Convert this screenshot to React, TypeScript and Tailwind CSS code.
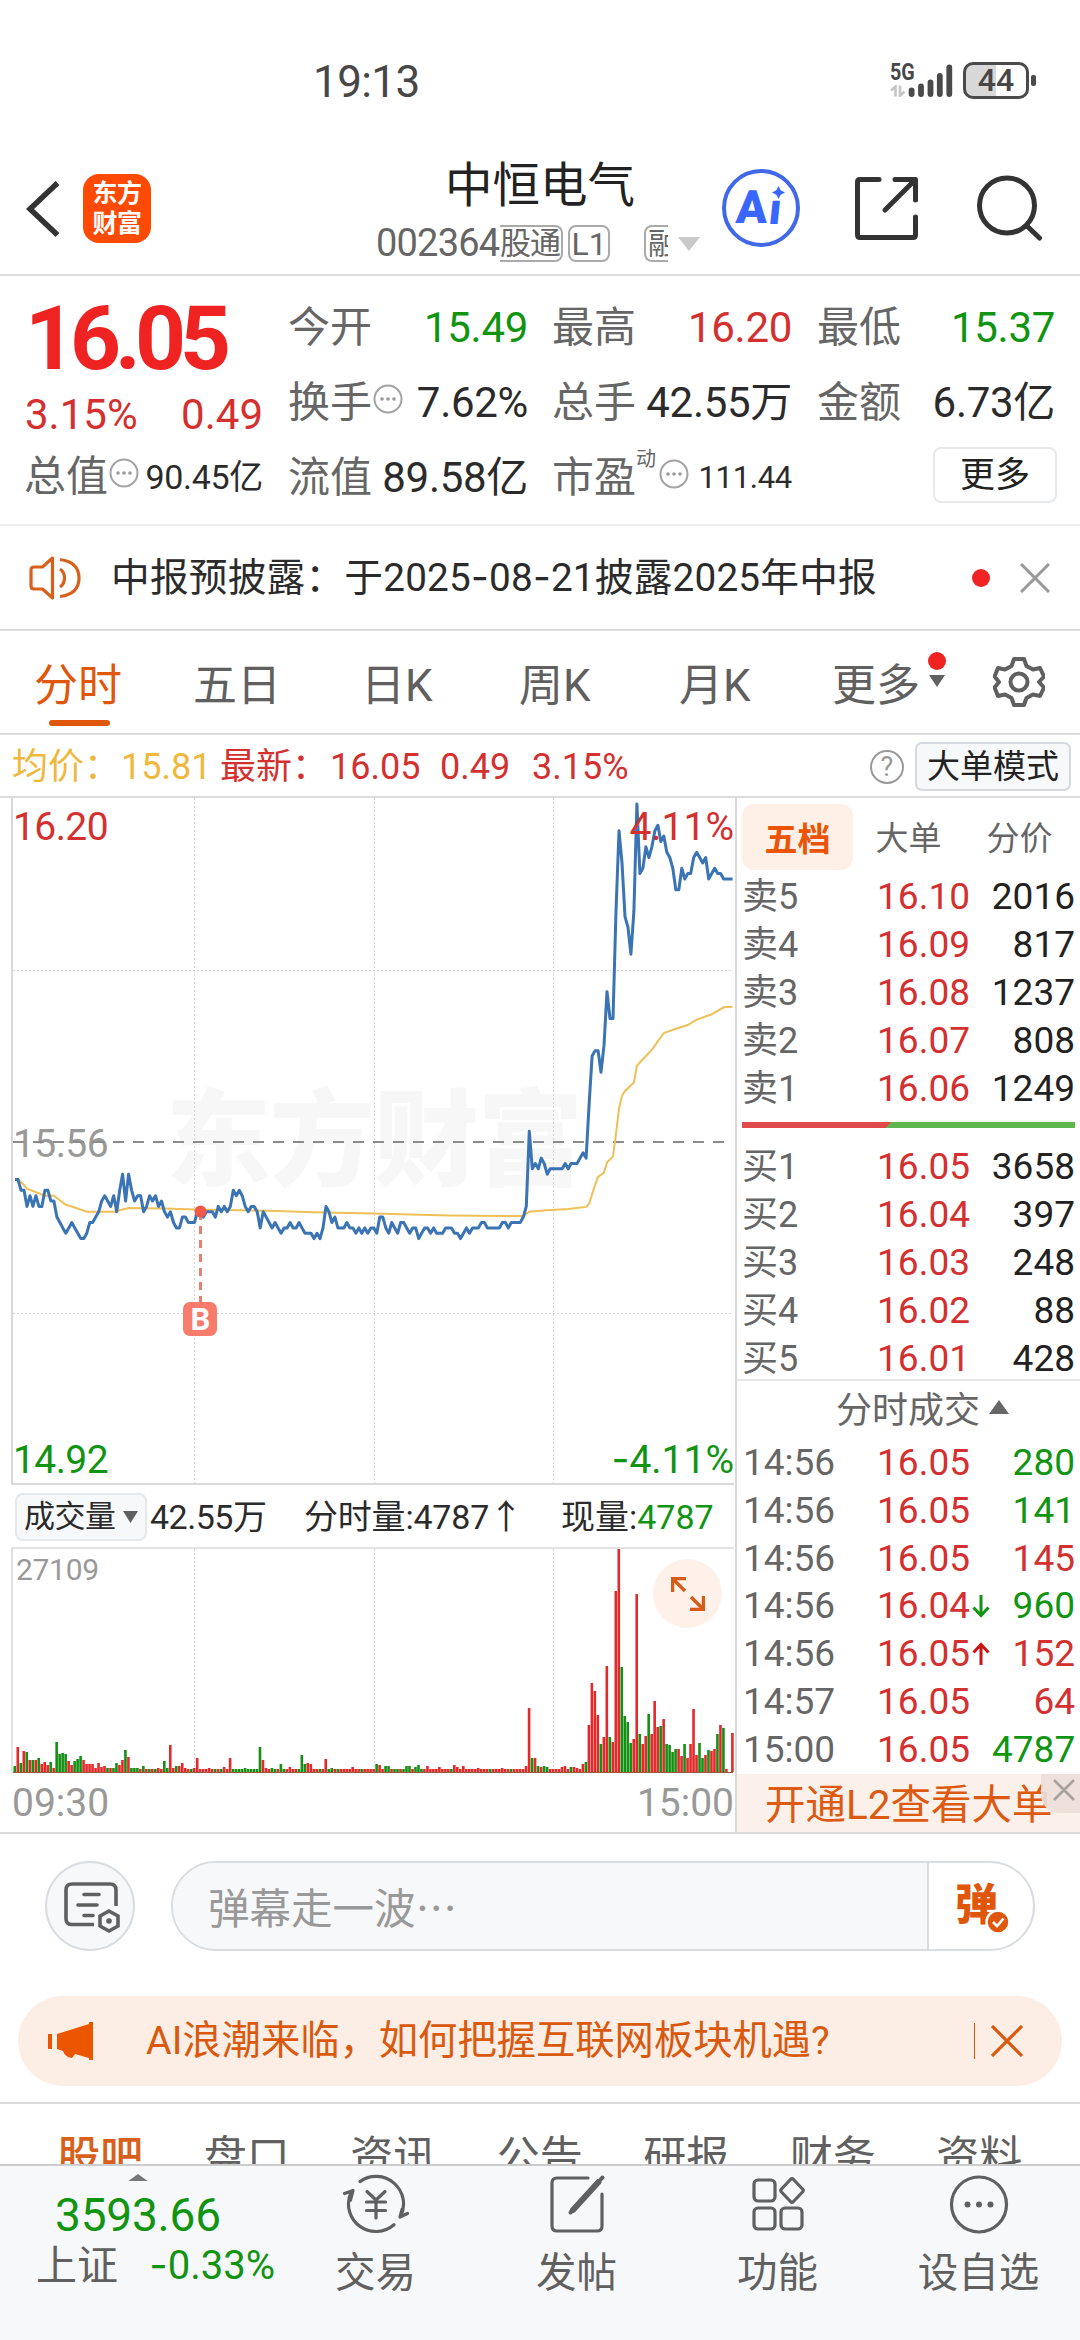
import React from 'react';
import clsx from 'clsx';

type Tone = 'up' | 'down' | 'plain';

const toneClass: Record<Tone, string> = {
    up: 'text-[#d3302f]',
    down: 'text-[#119411]',
    plain: 'text-[#2b2b2b]',
};

const SELLS = [
    { label: '卖5', price: '16.10', qty: '2016' },
    { label: '卖4', price: '16.09', qty: '817' },
    { label: '卖3', price: '16.08', qty: '1237' },
    { label: '卖2', price: '16.07', qty: '808' },
    { label: '卖1', price: '16.06', qty: '1249' },
];

const BUYS = [
    { label: '买1', price: '16.05', qty: '3658' },
    { label: '买2', price: '16.04', qty: '397' },
    { label: '买3', price: '16.03', qty: '248' },
    { label: '买4', price: '16.02', qty: '88' },
    { label: '买5', price: '16.01', qty: '428' },
];

const TICKS: { time: string; price: string; qty: string; tone: Tone; move?: 'up' | 'down' }[] = [
    { time: '14:56', price: '16.05', qty: '280', tone: 'down' },
    { time: '14:56', price: '16.05', qty: '141', tone: 'down' },
    { time: '14:56', price: '16.05', qty: '145', tone: 'up' },
    { time: '14:56', price: '16.04', qty: '960', tone: 'down', move: 'down' },
    { time: '14:56', price: '16.05', qty: '152', tone: 'up', move: 'up' },
    { time: '14:57', price: '16.05', qty: '64', tone: 'up' },
    { time: '15:00', price: '16.05', qty: '4787', tone: 'down' },
];

// Price per minute, in fen, 09:30 - 15:00
const PRICES = [
    1549, 1549, 1547, 1547, 1544, 1546, 1544, 1546, 1544, 1544, 1547, 1547, 1545, 1545, 1542, 1541, 1540, 1539, 1540, 1541,
    1540, 1539, 1538, 1538, 1539, 1541, 1541, 1542, 1543, 1545, 1546, 1545, 1544, 1546, 1543, 1547, 1550, 1545, 1550, 1547,
    1545, 1546, 1546, 1543, 1544, 1546, 1545, 1546, 1544, 1545, 1543, 1542, 1543, 1541, 1540, 1540, 1542, 1542, 1541, 1541,
    1541, 1543, 1543, 1542, 1543, 1543, 1543, 1542, 1544, 1543, 1544, 1543, 1544, 1547, 1546, 1547, 1546, 1544, 1543, 1544,
    1544, 1543, 1540, 1543, 1542, 1541, 1540, 1541, 1540, 1539, 1540, 1540, 1541, 1540, 1540, 1541, 1540, 1539, 1539, 1539,
    1538, 1539, 1538, 1540, 1544, 1543, 1541, 1542, 1540, 1540, 1540, 1541, 1540, 1540, 1539, 1540, 1539, 1540, 1539, 1540,
    1540, 1539, 1542, 1542, 1540, 1539, 1541, 1540, 1539, 1541, 1541, 1540, 1539, 1540, 1540, 1538, 1539, 1540, 1540, 1539,
    1540, 1539, 1539, 1539, 1540, 1540, 1540, 1539, 1539, 1538, 1539, 1540, 1539, 1540, 1540, 1540, 1541, 1541, 1540, 1540,
    1540, 1540, 1540, 1541, 1541, 1540, 1541, 1541, 1541, 1541, 1542, 1544, 1558, 1551, 1552, 1551, 1553, 1552, 1550, 1551,
    1551, 1551, 1551, 1551, 1552, 1551, 1552, 1552, 1552, 1553, 1554, 1553, 1563, 1572, 1573, 1573, 1569, 1574, 1584, 1579,
    1579, 1599, 1614, 1608, 1598, 1596, 1591, 1599, 1619, 1606, 1607, 1611, 1609, 1611, 1614, 1615, 1612, 1613, 1610, 1609,
    1607, 1603, 1603, 1607, 1605, 1606, 1606, 1609, 1610, 1609, 1608, 1609, 1605, 1606, 1607, 1606, 1606, 1605, 1605, 1605,
    1605,
];

// [minute, average price in fen]
const AVERAGE: [number, number][] = [
    [0, 1549], [1, 1549], [3, 1548], [4, 1547.3], [10, 1546], [13, 1546], [17, 1544.3], [20, 1543.8], [24, 1543], [33, 1543],
    [38, 1543.7], [50, 1543.6], [60, 1543.4], [75, 1543.3], [90, 1543.1], [100, 1542.9], [120, 1542.7], [145, 1542.3],
    [170, 1542.2], [172, 1543], [178, 1543.3], [185, 1543.5], [191, 1543.9], [192, 1544.5], [194, 1548], [195, 1549.5],
    [197, 1550.3], [198, 1552.2], [200, 1553.3], [201, 1557.5], [202, 1562.2], [203, 1564.6], [204, 1565.5], [207, 1567.1],
    [208, 1570.2], [210, 1571.4], [213, 1573.2], [215, 1574.8], [217, 1576.3], [221, 1577.1], [225, 1577.8], [228, 1578.8],
    [233, 1579.8], [237, 1581.1], [240, 1581.2],
];

// One token per minute: colour letter + bar height
const VOLUMES = `
g6 r25 g9 r21 g20 r12 g12 r12 g14 r8 r10 r7 g10 r4 g30 g18 g19 g18 r11 r7
g11 g13 g16 r12 r8 r8 r8 r4 r9 r5 r6 g4 r4 g4 g9 r7 r12 g22 r15 g4
g4 g4 r3 g6 r3 g3 r3 g3 r4 r3 g11 g4 r27 r4 g6 r6 r9 r4 r3 g3
r4 r14 r3 r3 r3 r4 r3 g3 r3 g3 r5 r3 r14 g3 g3 g3 g3 g4 g3 g3
g3 g3 g25 r12 r4 r3 g4 g3 r3 g8 g3 r3 r5 r3 r3 g3 g17 g8 r9 r8
r3 r3 g3 r3 r13 g3 g4 r3 g3 r3 r3 r3 r3 r5 r3 r3 g3 r3 r3 r3
r3 g8 r7 r3 g6 g6 r3 g3 g3 r3 g3 g6 g6 r3 g5 g7 g3 r3 r6 r3
r3 r3 r5 r3 r3 r3 g3 r7 r5 r3 r6 r3 r3 r3 r3 r4 r3 r3 r3 g3
r3 r3 r3 r4 r3 r3 g3 r3 r3 r3 r3 r6 r64 g14 r14 g6 r5 g6 g5 r3
r3 r3 r3 r5 r6 r3 g5 r5 r4 r3 r8 g10 r47 r89 r81 r57 g28 r35 r106 g35
r30 r181 r223 g105 g56 g50 g29 r33 r178 g38 r28 r36 g58 r38 r71 r45 g46 r53 g28 g27
g20 g23 r23 r16 g28 r14 r28 r63 r17 g29 g14 r17 g22 r21 r23 g38 r47 g44 r3 r0
r39`.trim().split(/\s+/);

const minuteX = (minute: number) => 2 + minute * 2.99;
const priceY = (price: number) => 344 - (price - 1556) * 5.367;

const MoreDots: React.FC<{ className?: string }> = ({ className }) => (
    <svg viewBox="0 0 30 30" className={clsx('h-[30px] w-[30px] shrink-0', className)}>
        <circle cx="15" cy="15" r="13.5" fill="none" stroke="#a3a3a3" strokeWidth="2" />
        <circle cx="9" cy="15" r="1.8" fill="#999" />
        <circle cx="15" cy="15" r="1.8" fill="#999" />
        <circle cx="21" cy="15" r="1.8" fill="#999" />
    </svg>
);

// Roboto's hyphen is too short for a minus sign
const Minus = () => <span className="font-['Inter']">-</span>;

const StatusBar = () => (
    <div className="flex h-[133px] items-start pt-[55px] pl-[313px] pr-[43px]">
        <span className="w-[577px] text-[44px] leading-[54px] tracking-[-0.6px] text-[#474747]">19:13</span>
        <div className="flex h-[40px] pt-[7px]">
            <div className="w-[18px]">
                <div className="mt-[1px] w-[30px] origin-left scale-x-[0.82] text-[24px] font-bold leading-[18px] text-[#474747]">5G</div>
                <svg viewBox="0 0 16 12" className="mt-[4px] h-[12px] w-[16px]" fill="none" stroke="#c4c4c4" strokeWidth="2.6">
                    <path d="M1 5.5 5.5 1.5V11.5M10 .5V10.5L14.5 6.5" />
                </svg>
            </div>
            <svg viewBox="0 0 46 36" className="h-[36px] w-[46px]" stroke="#4a4a4a" strokeWidth="5.8" strokeLinecap="round">
                <path d="M3.6 28.5V32M13 24.500V32M22.500 20.500V32M31.800 14V32M41.300 5.500V32" />
            </svg>
        </div>
        <div className="mt-[7px] ml-[9px] flex h-[37px] w-[66px] items-center overflow-hidden rounded-[10px] border-[3px] border-[#4a4a4a] bg-[linear-gradient(90deg,#d8d8d8_50%,#fff_50%)]">
            <span className="w-full text-center text-[32px] font-medium leading-[31px] text-[#474747]">44</span>
        </div>
        <div className="mt-[20px] ml-[2px] h-[11px] w-[5px] rounded-[2px] bg-[#4a4a4a]" />
    </div>
);

const Header = () => (
    <header className="flex h-[143px] border-b-2 border-[#dcdcdc]">
        <svg viewBox="0 0 34 56" className="mt-[48px] ml-[26px] h-[56px] w-[34px] shrink-0" fill="none" stroke="#333" strokeWidth="5.5">
            <path d="M31.500 2 4 28 31.500 54" />
        </svg>
        <div className="mt-[41px] ml-[23px] flex h-[69px] w-[68px] shrink-0 flex-col items-center justify-center rounded-[16px] bg-[#ff4a04] text-[25px] font-bold leading-[29.5px] tracking-[-0.5px] text-white">
            <span>东方</span>
            <span>财富</span>
        </div>
        <div className="ml-[225px] w-[325px] shrink-0">
            <h1 className="mt-[26px] ml-[69px] text-[47.5px] leading-[54px] text-[#222]">中恒电气</h1>
            <div className="mt-[12px] flex h-[37px] items-center whitespace-nowrap text-[#666]">
                <span className="w-[124px] shrink-0 text-[38px] leading-[37px] tracking-[-0.8px]">002364</span>
                <span className="h-[37px] w-[63px] shrink-0 rounded-r-[8px] border-2 border-l-0 border-[#aaa] text-[31px] leading-[33px] tracking-[-1px]">股通</span>
                <span className="ml-[5px] h-[37px] w-[42px] shrink-0 rounded-[8px] border-2 border-[#aaa] text-center text-[32px] leading-[34px]">L1</span>
                <span className="ml-[34px] h-[37px] w-[24px] shrink-0 overflow-hidden rounded-l-[8px] border-2 border-r-0 border-[#aaa] pl-[2px] text-[30px] leading-[33px]">融</span>
                <svg viewBox="0 0 22 14" className="ml-[10px] h-[14px] w-[22px] shrink-0" fill="#c9c9c9"><path d="M0 0H22L11 14Z" /></svg>
            </div>
        </div>
        <div className="relative mt-[36px] ml-[21px] h-[78px] w-[78px] shrink-0 rounded-full border-4 border-[#4169e6] text-[#3866ff]">
            <span className="absolute top-[11px] left-[10px] -skew-x-3 text-[46px] font-black leading-[47px]">A</span>
            <span className="absolute top-[13px] left-[43px] -skew-x-6 text-[44px] font-black leading-[47px]">ı</span>
            <svg viewBox="0 0 12 12" className="absolute top-[13px] left-[46px] h-[13px] w-[13px]" fill="currentColor">
                <path d="M6 0 8 4 12 6 8 8 6 12 4 8 0 6 4 4Z" />
            </svg>
        </div>
        <svg viewBox="0 0 66 66" className="mt-[42px] ml-[53px] h-[66px] w-[66px] shrink-0" fill="none" stroke="#333" strokeWidth="5" strokeLinecap="round" strokeLinejoin="round">
            <path d="M26 4.500H7Q4.500 4.500 4.500 7V59.500Q4.500 62.500 7 62.500H60Q62.500 62.500 62.500 60V42" />
            <path d="M42 4.500H62.500V25M61 6 32 35" />
        </svg>
        <svg viewBox="0 0 68 68" className="mt-[41px] ml-[56px] h-[68px] w-[68px] shrink-0" fill="none" stroke="#333" strokeWidth="5" strokeLinecap="round">
            <circle cx="32" cy="31.500" r="27.500" />
            <path d="M52 52 64.500 64" />
        </svg>
    </header>
);

const Stat: React.FC<{ label: string; value: string; tone?: Tone; dots?: boolean; sup?: string; size?: string }> = ({
    label, value, tone = 'plain', dots, sup, size = 'text-[42px]',
}) => (
    <div className="flex h-[75px] items-center text-[42px] leading-[50px]">
        <span className="text-[#666]">{label}</span>
        {sup && <span className="mt-[-37px] w-[22px] text-[20px] leading-[20px] text-[#666]">{sup}</span>}
        {dots && <MoreDots className="mt-[-8px] ml-[1px]" />}
        <span className={clsx('ml-auto whitespace-nowrap tracking-[-0.3px]', size, toneClass[tone])}>{value}</span>
    </div>
);

const Quote = () => (
    <section className="grid h-[250px] grid-cols-4 gap-x-[26px] border-b-2 border-[#eee] px-[25px] pt-[14px]">
        <div>
            <div className="h-[98px] text-[89px] font-bold leading-[98px] tracking-[-6px] text-[#f02323]">16.05</div>
            <div className="flex h-[54px] items-center justify-between text-[42px] leading-[54px] text-[#d3302f]">
                <span>3.15%</span>
                <span>0.49</span>
            </div>
            <div className="-ml-px mt-[-3px]"><Stat label="总值" value="90.45亿" dots size="text-[34px]" /></div>
        </div>
        <div className="-mr-px -ml-px">
            <Stat label="今开" value="15.49" tone="down" />
            <Stat label="换手" value="7.62%" dots />
            <Stat label="流值" value="89.58亿" />
        </div>
        <div className="-mr-px -ml-px">
            <Stat label="最高" value="16.20" tone="up" />
            <Stat label="总手" value="42.55万" />
            <Stat label="市盈" value="111.44" sup="动" dots size="text-[31px]" />
        </div>
        <div>
            <Stat label="最低" value="15.37" tone="down" />
            <Stat label="金额" value="6.73亿" />
            <button className="mt-[7px] mr-[-2px] ml-auto block h-[56px] w-[124px] rounded-[8px] border-2 border-[#e7e9eb] text-[35px] leading-[51px] text-[#222]">更多</button>
        </div>
    </section>
);

const Notice = () => (
    <section className="flex h-[105px] items-center border-b-2 border-[#dcdcdc] pl-[29px]">
        <svg viewBox="0 0 52 44" className="h-[44px] w-[52px]" fill="none" stroke="#d9601c" strokeWidth="3.200" strokeLinejoin="round">
            <path d="M23.500 2 13.500 11H5Q2 11 2 14V30Q2 33 5 33H13.500L23.500 42Z" />
            <path d="M31 13Q35.500 16 35.500 22T31 31M31 3.500Q50 6 50 22T31 40.500" />
        </svg>
        <span className="ml-[30px] w-[861px] text-[38.7px] leading-[52px] tracking-[0.2px] whitespace-nowrap text-[#2b2b2b]">
            中报预披露：于2025<Minus />08<Minus />21披露2025年中报
        </span>
        <span className="h-[18px] w-[18px] rounded-full bg-[#f02323]" />
        <svg viewBox="0 0 30 30" className="ml-[30px] h-[30px] w-[30px]" stroke="#999" strokeWidth="3"><path d="M1 1 29 29M29 1 1 29" /></svg>
    </section>
);

const PeriodTabs = () => (
    <nav className="flex h-[104px] items-start border-b-2 border-[#dcdcdc] pt-[25px] pl-[34px] text-[44px] leading-[60px] text-[#606060]">
        <div className="w-[159px] text-[#e0570c]">
            分时
            <div className="mt-[4px] ml-[15px] h-[6px] w-[61px] rounded-full bg-[#e0570c]" />
        </div>
        <span className="w-[168px]">五日</span>
        <span className="w-[158px]">日K</span>
        <span className="w-[160px]">周K</span>
        <span className="w-[153px]">月K</span>
        <span className="w-[96px]">更多</span>
        <div className="w-[18px]">
            <div className="mt-[-4px] h-[18px] w-[18px] rounded-full bg-[#f02323]" />
            <svg viewBox="0 0 16 12" className="mt-[5px] ml-px h-[12px] w-[16px]" fill="#606060"><path d="M0 0H16L8 12Z" /></svg>
        </div>
        <svg viewBox="0 0 52 52" className="ml-[47px] h-[52px] w-[52px]" fill="none" stroke="#606060" strokeWidth="4" strokeLinejoin="round">
            <path d="M21 3H31L33.500 10 40 13.500 47 12 51 20.500 46 26 51 31.500 47 40 40 38.500 33.500 42 31 49H21L18.500 42 12 38.500 5 40 1.500 31.500 6 26 1.500 20.500 5 12 12 13.500 18.500 10Z" />
            <circle cx="26" cy="26" r="8.500" />
        </svg>
    </nav>
);

const InfoRow = () => (
    <div className="flex h-[63px] items-center border-b-2 border-[#dcdcdc] pt-[2px] pl-[12px] text-[36px] leading-[48px] text-[#d3302f]">
        <span className="w-[109px] text-[#efb83c]">均价：</span>
        <span className="w-[99px] text-[#efb83c]">15.81</span>
        <span className="w-[110px]">最新：</span>
        <span className="w-[110px]">16.05</span>
        <span className="w-[92px]">0.49</span>
        <span className="w-[338px]">3.15%</span>
        <span className="h-[34px] w-[34px] rounded-full border-2 border-[#999] text-center text-[27px] leading-[31px] text-[#999]">?</span>
        <button className="ml-[11px] h-[49px] w-[156px] rounded-[7px] border-2 border-[#d5d9e0] bg-[#f7f8fa] text-[33px] leading-[45px] text-[#222]">大单模式</button>
    </div>
);

const GridLines: React.FC<{ height: number }> = ({ height }) => (
    <path d={`M181.500 0V${height}M361.500 0V${height}M540.500 0V${height}`} stroke="#d6d6d6" strokeWidth="1" strokeDasharray="2 2" />
);

const PriceChart = () => {
    const priceLine = PRICES.map((p, i) => `${minuteX(i).toFixed(1)},${priceY(p).toFixed(1)}`).join(' ');
    const avgLine = AVERAGE.map(([m, p]) => `${minuteX(m).toFixed(1)},${priceY(p).toFixed(1)}`).join(' ');

    return (
        <div className="relative ml-[11px] h-[687px] w-[723px] border-b-2 border-l-2 border-[#d8d8d8] text-[39px] leading-[40px] tracking-[-0.6px]">
            <span className="absolute top-[284px] left-[153px] text-[105px] font-black leading-[120px] tracking-[-1px] text-[#f7f7f7]">东方财富</span>
            <span className="absolute top-[326px] left-0 text-[#999]">15.56</span>
            <svg viewBox="0 0 722 686" className="absolute inset-0 h-[686px] w-[722px]" fill="none">
                <GridLines height={686} />
                <path d="M0 172.500H720M0 515.500H720" stroke="#d6d6d6" strokeDasharray="2 2" />
                <path d="M0 344H720" stroke="#8c8c8c" strokeWidth="2" strokeDasharray="11 9" />
                <polyline points={avgLine} stroke="#efbf58" strokeWidth="2" />
                <polyline points={priceLine} stroke="#3a74b4" strokeWidth="3" strokeLinejoin="round" />
                <path d="M187.500 414V504" stroke="#e8806f" strokeWidth="3" strokeDasharray="8 6" />
                <circle cx="187.500" cy="413.500" r="6" fill="#f0584a" />
            </svg>
            <span className="absolute top-[504px] left-[170px] h-[34px] w-[34px] rounded-[7px] bg-[#f77c6b] text-center text-[31px] font-bold leading-[35px] text-white">B</span>
            <span className="absolute top-[9px] left-0 text-[#d3302f]">16.20</span>
            <span className="absolute top-[9px] right-0 text-[#d3302f] tracking-normal">4.11%</span>
            <span className="absolute bottom-[3px] left-0 text-[#119411]">14.92</span>
            <span className="absolute right-0 bottom-[3px] text-[#119411] tracking-normal"><Minus />4.11%</span>
        </div>
    );
};

const VolumeChart = () => (
    <>
        <div className="flex h-[62px] items-center pt-[2px] pl-[15px] text-[34px] leading-[48px] tracking-[-0.5px] text-[#2b2b2b]">
            <span className="flex h-[48px] w-[132px] items-center rounded-[8px] border-2 border-[#e6e8eb] bg-[#f7f8fa] pl-[7px] text-[31px]">
                成交量
                <svg viewBox="0 0 15 12" className="ml-[7px] h-[12px] w-[15px]" fill="#606060"><path d="M0 0H15L7.500 12Z" /></svg>
            </span>
            <span className="ml-[3px] w-[154px]">42.55万</span>
            <span className="w-[257px] tracking-[-0.2px]">分时量:4787↑</span>
            <span className="tracking-normal">现量:<span className="text-[#119411]">4787</span></span>
        </div>
        <div className="relative ml-[11px] h-[226px] w-[723px] border-t-2 border-l-2 border-[#e2e2e2]">
            <svg viewBox="0 0 722 224" className="absolute inset-0 h-[224px] w-[722px]">
                <GridLines height={224} />
                {VOLUMES.map((token, i) => {
                    const h = Number(token.slice(1));
                    return <rect key={i} x={minuteX(i) - 1.5} y={223 - h} width="2.600" height={h} fill={token[0] === 'r' ? '#e32a2a' : '#149014'} />;
                })}
                <path d="M0 223.500H720" stroke="#9a5a3a" strokeWidth="1" />
            </svg>
            <span className="absolute top-[4px] left-[3px] text-[30px] leading-[34px] tracking-[-0.3px] text-[#999]">27109</span>
            <span className="absolute top-[10px] right-[12px] flex h-[69px] w-[69px] items-center justify-center rounded-full bg-[#fdf1ea]">
                <svg viewBox="0 0 34 34" className="h-[34px] w-[34px]" fill="none" stroke="#d85c18" strokeWidth="3.400">
                    <path d="M1.500 15V1.500H15M2 2 14 14M32.500 19V32.500H19M32 32 20 20" />
                </svg>
            </span>
        </div>
        <div className="flex h-[59px] items-center justify-between pr-[1px] pl-[12px] text-[39px] leading-[50px] text-[#999]">
            <span>09:30</span>
            <span>15:00</span>
        </div>
    </>
);

const BookRow: React.FC<{ label: string; price: string; qty: string }> = ({ label, price, qty }) => (
    <div className="flex h-[48px] items-center text-[37px] leading-[48px]">
        <span className="w-[110px] text-[36px] text-[#666]">{label}</span>
        <span className="w-[118px] text-right text-[#d3302f]">{price}</span>
        <span className="flex-1 text-right text-[#222]">{qty}</span>
    </div>
);

const OrderBook = () => (
    <aside className="w-[345px] border-l-2 border-[#d8d8d8]">
        <div className="flex h-[72px] items-center pt-[6px] pl-[5px] text-[33px] text-[#666]">
            <span className="h-[66px] w-[111px] rounded-[12px] bg-[#feefe7] text-center font-bold leading-[71px] text-[#ea5404]">五档</span>
            <span className="w-[111px] pt-[4px] text-center">大单</span>
            <span className="w-[111px] pt-[4px] text-center">分价</span>
        </div>
        <div className="h-[511px] border-b-2 border-[#e8e8e8] pt-[3px] pr-[5px] pl-[5px]">
            {SELLS.map(row => <BookRow key={row.label} {...row} />)}
            <div className="mt-[9px] mb-[15px] h-[6px] w-[333px] bg-[linear-gradient(135deg,#e04b4b_44%,#5fb64c_44%)]" />
            {BUYS.map(row => <BookRow key={row.label} {...row} />)}
        </div>
        <div className="flex h-[58px] items-center justify-center pt-[2px] pl-[28px] text-[36px] leading-[50px] text-[#666]">
            分时成交
            <svg viewBox="0 0 20 14" className="mt-[-9px] ml-[9px] h-[14px] w-[20px]" fill="#666"><path d="M10 0 20 14H0Z" /></svg>
        </div>
        {TICKS.map((tick, i) => (
            <div key={i} className="flex h-[47.8px] items-center pr-[5px] pl-[6px] text-[37px] leading-[48px]">
                <span className="w-[109px] shrink-0 text-[#666]">{tick.time}</span>
                <span className="w-[118px] shrink-0 text-right text-[#d3302f]">{tick.price}</span>
                <span className="flex w-[22px] shrink-0 items-center justify-center">
                    {tick.move && (
                        <svg viewBox="0 0 18 24" className={clsx('h-[24px] w-[18px]', tick.move === 'down' && 'rotate-180')} fill="none" stroke={tick.move === 'up' ? '#c81414' : '#119411'} strokeWidth="3">
                            <path d="M9 23V2.500M1.500 10.500 9 2.500 16.500 10.500" />
                        </svg>
                    )}
                </span>
                <span className={clsx('flex-1 text-right', toneClass[tick.tone])}>{tick.qty}</span>
            </div>
        ))}
        <div className="relative h-[58px] bg-[#fcf0ea] pl-[28px] text-[40.5px] leading-[63px] whitespace-nowrap text-[#dc5a12]">
            开通L2查看大单
            <span className="absolute top-0 right-0 flex h-[39px] w-[39px] items-center justify-center rounded-bl-[18px] bg-[#ecdfda]/90">
                <svg viewBox="0 0 22 22" className="mt-[-6px] ml-[6px] h-[22px] w-[22px]" stroke="#a8a09c" strokeWidth="2.500"><path d="M1 1 21 21M21 1 1 21" /></svg>
            </span>
        </div>
    </aside>
);

const Danmaku = () => (
    <section className="flex h-[164px] border-t-2 border-[#dcdcdc] pt-[27px] pl-[45px]">
        <span className="flex h-[90px] w-[90px] items-center justify-center rounded-full border-2 border-[#d9dce1] bg-[#f7f8fa]">
            <svg viewBox="0 0 56 52" className="mt-[3px] ml-[3px] h-[52px] w-[56px]" fill="none" stroke="#606060" strokeWidth="3.600">
                <path d="M30 42.500H8Q2 42.500 2 37V8Q2 2 8 2H46Q52 2 52 8V24" />
                <path d="M20 12.500H35M14 23H33M20 33.500H29" strokeLinecap="round" />
                <path d="M45 29 54 34V44L45 49 36 44V34Z" />
                <circle cx="45" cy="39" r="2.800" fill="#606060" stroke="none" />
            </svg>
        </span>
        <div className="ml-[36px] flex h-[90px] w-[864px] overflow-hidden rounded-full border-2 border-[#d9dce1] bg-white">
            <span className="w-[756px] border-r-2 border-[#d9dce1] bg-[#f7f8fa] pl-[35px] font-['Noto_Sans_CJK_SC'] text-[41.5px] leading-[86px] text-[#999]">弹幕走一波…</span>
            <span className="relative pl-[26px] text-[43px] font-black leading-[84px] text-[#e0570c]">
                弹
                <svg viewBox="0 0 26 26" className="absolute top-[46px] left-[56px] h-[26px] w-[26px]">
                    <circle cx="13" cy="13" r="11.500" fill="#e0570c" stroke="#fff" strokeWidth="2.500" />
                    <path d="M8 13 12 17 18.500 9.500" fill="none" stroke="#fff" strokeWidth="2.600" />
                </svg>
            </span>
        </div>
    </section>
);

const Promo = () => (
    <section className="flex h-[108px] items-start border-b-2 border-[#dcdcdc] px-[18px]">
        <div className="flex h-[90px] w-full items-center rounded-full bg-[#fceee5] pl-[30px] text-[#d9590f]">
            <svg viewBox="0 0 46 40" className="h-[40px] w-[46px]" fill="#ec5600">
                <path d="M0 13H4V28H0ZM9 13 41 3V1H45V39H41V37L27 33 24 37Q17 36 15 30L9 28Z" />
            </svg>
            <span className="ml-[52px] w-[828px] text-[39.3px] leading-[50px]">AI浪潮来临，如何把握互联网板块机遇?</span>
            <span className="h-[36px] w-px bg-[#d9590f]" />
            <svg viewBox="0 0 32 32" className="ml-[16px] h-[32px] w-[32px]" stroke="#d9590f" strokeWidth="3.200"><path d="M1 1 31 31M31 1 1 31" /></svg>
        </div>
    </section>
);

const SectionTabs = () => (
    <nav className="flex h-[60px] overflow-hidden pt-[23px] pl-[27px] text-[43px] leading-[60px] text-[#606060]">
        {['股吧', '盘口', '资讯', '公告', '研报', '财务', '资料'].map((name, i) => (
            <span key={name} className={clsx('w-[146.5px] shrink-0 text-center', i === 0 && 'font-medium text-[#d9601c]')}>{name}</span>
        ))}
    </nav>
);

const NavItem: React.FC<{ label: string; children: React.ReactNode }> = ({ label, children }) => (
    <div className="flex w-[201px] flex-col items-center text-[40.5px] leading-[54px] text-[#606060]">
        <svg viewBox="0 0 66 60" className="mt-[8px] mb-[12px] h-[60px] w-[66px]" fill="none" stroke="#606060" strokeWidth="3.200" strokeLinecap="round" strokeLinejoin="round">
            {children}
        </svg>
        {label}
    </div>
);

const BottomBar = () => (
    <footer className="flex h-[176px] border-t-2 border-[#ccc] bg-[#f7f8fa]">
        <div className="w-[275px] text-[#119411]">
            <svg viewBox="0 0 22 8" className="mt-[8px] ml-[127px] h-[7px] w-[22px]" fill="#77777c"><path d="M11 0 22 8H0Z" /></svg>
            <div className="mt-[8px] ml-[55px] text-[46px] leading-[52px] tracking-[-0.2px]">3593.66</div>
            <div className="mt-px flex items-center pl-[36px] text-[40px] leading-[46px] whitespace-nowrap">
                <span className="w-[117px] text-[41px] text-[#606060]">上证</span>
                <span><Minus />0.33%</span>
            </div>
        </div>
        <NavItem label="交易">
            <path d="M17 7.600A27.500 27.500 0 0 1 57.500 42.500M51 50.800A27.500 27.500 0 0 1 7.500 19.700M1.500 19.500 10 16.500 7.500 26M64.500 39.500 57 43 59 35.500" />
            <path d="M24 17.500 33 26 42 17.500M33 26V44M23.500 28H42.500M23.500 36.500H42.500" />
        </NavItem>
        <NavItem label="发帖">
            <path d="M44 4H13Q8 4 8 9V52Q8 57 13 57H53Q58 57 58 52V20" />
            <path d="M54.500 8 29 36" strokeWidth="6" />
            <path d="M29 35 26.500 38.500M57 5 58.500 3.500" strokeWidth="4" />
        </NavItem>
        <NavItem label="功能">
            <rect x="9" y="6" width="21" height="21" rx="4" />
            <rect x="9" y="34" width="21" height="21" rx="4" />
            <rect x="36" y="34" width="21" height="21" rx="4" />
            <path d="M45.500 5.500Q47 4 48.500 5.500L57.500 15Q59 16.500 57.500 18L48.500 27.500Q47 29 45.500 27.500L36.500 18Q35 16.500 36.500 15Z" />
        </NavItem>
        <NavItem label="设自选">
            <circle cx="33" cy="30.500" r="27.500" />
            <circle cx="21.500" cy="30.500" r="3" fill="#606060" stroke="none" />
            <circle cx="33" cy="30.500" r="3" fill="#606060" stroke="none" />
            <circle cx="44.500" cy="30.500" r="3" fill="#606060" stroke="none" />
        </NavItem>
    </footer>
);

export default function App() {
    return (
        <div className="h-[2340px] w-[1080px] overflow-hidden bg-white font-['Roboto','Noto_Sans_CJK_SC',sans-serif]">
            <StatusBar />
            <Header />
            <Quote />
            <Notice />
            <PeriodTabs />
            <InfoRow />
            <main className="flex h-[1034px]">
                <div className="w-[735px]">
                    <PriceChart />
                    <VolumeChart />
                </div>
                <OrderBook />
            </main>
            <Danmaku />
            <Promo />
            <SectionTabs />
            <BottomBar />
        </div>
    );
}
